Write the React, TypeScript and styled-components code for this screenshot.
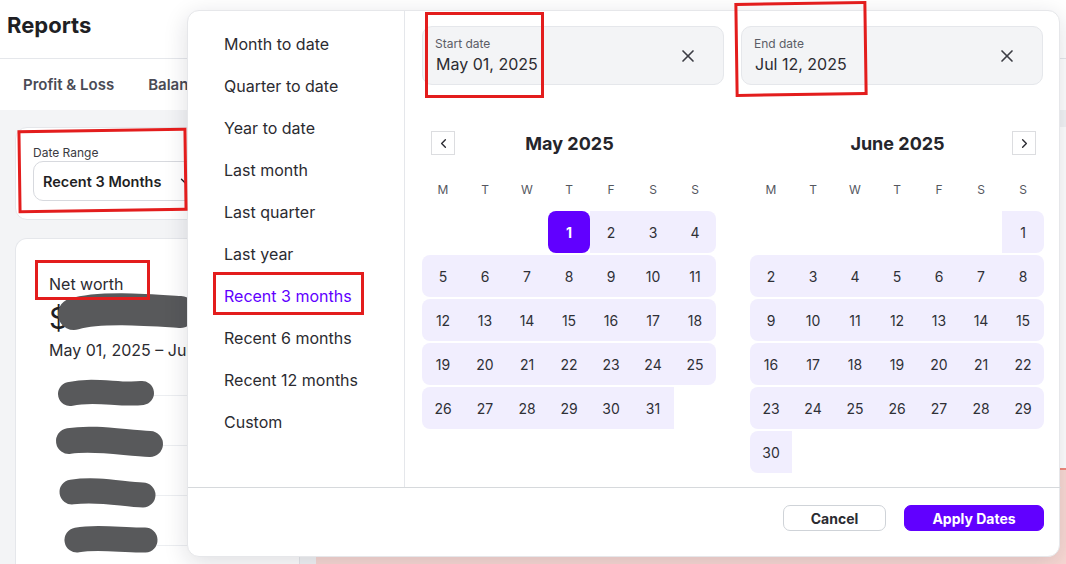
import React from "react";
import styled, { createGlobalStyle } from "styled-components";
import { X, ChevronLeft, ChevronRight, ChevronDown } from "lucide-react";

const GlobalStyle = createGlobalStyle`
  html, body { margin: 0; padding: 0; }
  body { font-family: Inter, "Noto Sans", Arial, sans-serif; color: #2b2b31; }
  * { box-sizing: border-box; }
`;

const PURPLE = "#6100ff";
const RANGE = "#f1eefe";

const Page = styled.div`
  position: relative;
  width: 1066px;
  height: 564px;
  overflow: hidden;
  background: #f3f4f6;
  display: flex;
  flex-direction: column;
`;

const Header = styled.header`
  flex-shrink: 0;
  height: 59px;
  background: #fff;
  border-bottom: 1px solid #e5e7eb;
  display: flex;
  align-items: center;
  padding-left: 7px;
  padding-bottom: 8px;
`;

const Title = styled.h1`
  margin: 0;
  font-size: 22px;
  font-weight: 700;
  color: #1f1f24;
`;

const Tabs = styled.nav`
  flex-shrink: 0;
  height: 51px;
  background: #fff;
  display: flex;
  align-items: center;
  gap: 34px;
  padding: 0 0 1px 23px;
`;

const Tab = styled.span`
  font-size: 15px;
  font-weight: 600;
  color: #4a4b55;
`;

const Content = styled.div`
  flex: 1;
  min-height: 0;
  overflow: hidden;
  display: grid;
  grid-template-columns: 285px 1fr;
  gap: 16px;
  padding: 17px 0 0 15px;
`;

const LeftCol = styled.div`
  display: flex;
  flex-direction: column;
  gap: 18px;
`;

const Card = styled.section`
  background: #fff;
  border: 1px solid #e5e7eb;
  border-radius: 12px;
`;

const RangeCard = styled(Card)`
  flex-shrink: 0;
  height: 93px;
  padding: 17px 0 0 17px;
`;

const FieldLabel = styled.div`
  font-size: 12px;
  line-height: 15px;
  color: #3a3a42;
  margin-bottom: 1px;
`;

const SelectBox = styled.div`
  width: 170px;
  height: 40px;
  border: 1px solid #d7d9de;
  border-radius: 10px;
  display: flex;
  align-items: center;
  justify-content: space-between;
  padding: 0 10px 0 9px;
  font-size: 14.5px;
  font-weight: 600;
  color: #1f1f24;
`;

const WorthCard = styled(Card)`
  flex: 1;
  padding: 35px 0 0 33px;
  border-bottom: none;
  border-radius: 12px 12px 0 0;
`;

const WorthLabel = styled.div`
  font-size: 16px;
  color: #2b2b31;
  line-height: 20px;
`;

const WorthValue = styled.div`
  font-size: 30px;
  line-height: 36px;
  margin-top: 6px;
  color: #1f1f24;
`;

const WorthDates = styled.div`
  font-size: 16px;
  line-height: 20px;
  margin-top: 4px;
  white-space: nowrap;
`;

const WorthRows = styled.div`
  margin-top: 35px;
  display: flex;
  flex-direction: column;
`;

const WorthRow = styled.div`
  height: 50px;
  margin-left: 100px;
  border-top: 1px solid #eceef1;
`;

const RightCol = styled.div`
  display: flex;
  flex-direction: column;
`;

const RightPanel = styled.div`
  flex: 1;
  background: #fff;
  border-top-left-radius: 12px;
`;

const PinkPanel = styled.div`
  height: 127px;
  background: #f9d9d4;
  border-top: 2px solid #f08a7c;
`;

/* ----- popup ----- */

const Popup = styled.div`
  position: absolute;
  left: 187px;
  top: 10px;
  width: 873px;
  height: 547px;
  background: #fff;
  border: 1px solid #e6e7ea;
  border-radius: 12px;
  box-shadow: 0 6px 24px rgba(20, 20, 40, 0.14);
  display: grid;
  grid-template-columns: 217px 1fr;
  grid-template-rows: 1fr 69px;
`;

const Presets = styled.ul`
  list-style: none;
  margin: 0;
  padding: 12px 0 0 36px;
  border-right: 1px solid #e5e7eb;
`;

const Preset = styled.li<{ $active?: boolean }>`
  height: 42px;
  line-height: 42px;
  font-size: 16px;
  color: ${(p) => (p.$active ? PURPLE : "#2b2b31")};
`;

const Main = styled.div`
  padding: 15px 17px 0 17px;
  display: flex;
  flex-direction: column;
`;

const DateInputs = styled.div`
  display: grid;
  grid-template-columns: 302px 302px;
  gap: 17px;
`;

const DateBox = styled.div`
  height: 59px;
  background: #f3f4f6;
  border: 1px solid #e5e7eb;
  border-radius: 10px;
  display: flex;
  align-items: center;
  justify-content: space-between;
  padding: 0 25px 0 12px;
`;

const DateText = styled.div`
  display: flex;
  flex-direction: column;
`;

const DateLabel = styled.span`
  font-size: 12px;
  color: #5b5d66;
  line-height: 16px;
`;

const DateValue = styled.span`
  font-size: 16px;
  color: #2b2b31;
  line-height: 22px;
  margin-top: 1px;
  margin-left: 1px;
`;

const Calendars = styled.div`
  margin-top: 46px;
  display: grid;
  grid-template-columns: 294px 294px;
  gap: 34px;
`;

const Calendar = styled.div`
  display: flex;
  flex-direction: column;
`;

const CalHead = styled.div`
  height: 24px;
  display: grid;
  grid-template-columns: 24px 1fr 24px;
  align-items: center;
  padding: 0 8px 0 9px;
`;

const CalTitle = styled.div`
  text-align: center;
  font-size: 18px;
  font-weight: 700;
  color: #25252b;
`;

const NavButton = styled.button`
  width: 24px;
  height: 24px;
  border: 1px solid #dcdde0;
  background: #fff;
  padding: 0;
  display: flex;
  align-items: center;
  justify-content: center;
  color: #2b2b31;
`;

const Grid = styled.div`
  display: grid;
  grid-template-columns: repeat(7, 42px);
  row-gap: 2px;
`;

const WeekRow = styled(Grid)`
  margin-top: 23px;
  margin-bottom: 9px;
`;

const WeekDay = styled.div`
  height: 24px;
  line-height: 24px;
  text-align: center;
  font-size: 12px;
  color: #55575f;
`;

const Day = styled.div<{ $kind: "empty" | "range" | "start"; $left?: boolean; $right?: boolean }>`
  height: 42px;
  display: flex;
  align-items: center;
  justify-content: center;
  font-size: 14px;
  color: ${(p) => (p.$kind === "start" ? "#fff" : "#2f3036")};
  font-weight: ${(p) => (p.$kind === "start" ? 700 : 400)};
  background: ${(p) => (p.$kind === "start" ? PURPLE : p.$kind === "range" ? RANGE : "transparent")};
  border-radius: ${(p) =>
    p.$kind === "start"
      ? "8px"
      : `${p.$left ? 8 : 0}px ${p.$right ? 8 : 0}px ${p.$right ? 8 : 0}px ${p.$left ? 8 : 0}px`};
`;

const Footer = styled.div`
  grid-column: 1 / -1;
  border-top: 1px solid #d6d9dc;
  display: flex;
  align-items: center;
  justify-content: flex-end;
  gap: 18px;
  padding: 0 17px 8px 0;
`;

const Button = styled.button<{ $primary?: boolean }>`
  height: 26px;
  padding: 0;
  width: ${(p) => (p.$primary ? "140px" : "103px")};
  border-radius: 7px;
  font-family: inherit;
  font-size: 14px;
  font-weight: 700;
  border: 1px solid ${(p) => (p.$primary ? PURPLE : "#cfd3d8")};
  background: ${(p) => (p.$primary ? PURPLE : "#fff")};
  color: ${(p) => (p.$primary ? "#fff" : "#2b2b31")};
`;

/* ----- overlays ----- */

const Redaction = styled.svg`
  position: absolute;
  left: 0;
  top: 0;
  pointer-events: none;
`;

const Mark = styled.div<{ $x: number; $y: number; $w: number; $h: number; $r: number }>`
  position: absolute;
  left: ${(p) => p.$x}px;
  top: ${(p) => p.$y}px;
  width: ${(p) => p.$w}px;
  height: ${(p) => p.$h}px;
  border: 3px solid #e31d1d;
  transform: rotate(${(p) => p.$r}deg);
  pointer-events: none;
`;

const presets = [
  "Month to date",
  "Quarter to date",
  "Year to date",
  "Last month",
  "Last quarter",
  "Last year",
  "Recent 3 months",
  "Recent 6 months",
  "Recent 12 months",
  "Custom",
];

const weekdays = ["M", "T", "W", "T", "F", "S", "S"];

type MonthProps = {
  title: string;
  offset: number;
  days: number;
  startDay?: number;
  nav: "prev" | "next";
};

function Month({ title, offset, days, startDay, nav }: MonthProps) {
  const cells: React.ReactNode[] = [];
  for (let i = 0; i < offset; i++) cells.push(<Day key={`e${i}`} $kind="empty" />);
  for (let d = 1; d <= days; d++) {
    const col = (offset + d - 1) % 7;
    cells.push(
      <Day
        key={d}
        $kind={d === startDay ? "start" : "range"}
        $left={col === 0}
        $right={col === 6}
      >
        {d}
      </Day>
    );
  }
  return (
    <Calendar>
      <CalHead>
        {nav === "prev" ? (
          <NavButton aria-label="Previous month">
            <ChevronLeft size={15} strokeWidth={2.2} />
          </NavButton>
        ) : (
          <span />
        )}
        <CalTitle>{title}</CalTitle>
        {nav === "next" ? (
          <NavButton aria-label="Next month">
            <ChevronRight size={15} strokeWidth={2.2} />
          </NavButton>
        ) : (
          <span />
        )}
      </CalHead>
      <WeekRow>
        {weekdays.map((w, i) => (
          <WeekDay key={i}>{w}</WeekDay>
        ))}
      </WeekRow>
      <Grid>{cells}</Grid>
    </Calendar>
  );
}

export default function App() {
  return (
    <>
      <GlobalStyle />
      <Page>
        <Header>
          <Title>Reports</Title>
        </Header>
        <Tabs>
          <Tab>Profit &amp; Loss</Tab>
          <Tab>Balance Sheet</Tab>
          <Tab>Cash Flow</Tab>
        </Tabs>
        <Content>
          <LeftCol>
            <RangeCard>
              <FieldLabel>Date Range</FieldLabel>
              <SelectBox>
                Recent 3 Months
                <ChevronDown size={14} strokeWidth={2.4} />
              </SelectBox>
            </RangeCard>
            <WorthCard>
              <WorthLabel>Net worth</WorthLabel>
              <WorthValue>$</WorthValue>
              <WorthDates>May 01, 2025 – Jul 12, 2025</WorthDates>
              <WorthRows>
                <WorthRow />
                <WorthRow />
                <WorthRow />
                <WorthRow />
              </WorthRows>
            </WorthCard>
          </LeftCol>
          <RightCol>
            <RightPanel />
            <PinkPanel />
          </RightCol>
        </Content>

        <Redaction width="200" height="564" viewBox="0 0 200 564">
          <g stroke="#58595b" strokeLinecap="round" fill="none">
            <path d="M74 314 C 100 306, 150 310, 180 312" strokeWidth="32" />
            <path d="M70 394 C 95 388, 120 396, 142 393" strokeWidth="24" />
            <path d="M69 441 C 95 437, 125 443, 150 444" strokeWidth="26" />
            <path d="M72 492 C 100 488, 125 495, 143 495" strokeWidth="25" />
            <path d="M77 540 C 100 536, 125 541, 145 540" strokeWidth="25" />
          </g>
        </Redaction>

        <Popup>
          <Presets>
            {presets.map((p) => (
              <Preset key={p} $active={p === "Recent 3 months"}>
                {p}
              </Preset>
            ))}
          </Presets>
          <Main>
            <DateInputs>
              <DateBox>
                <DateText>
                  <DateLabel>Start date</DateLabel>
                  <DateValue>May 01, 2025</DateValue>
                </DateText>
                <X size={20} strokeWidth={2} color="#3c3d44" />
              </DateBox>
              <DateBox>
                <DateText>
                  <DateLabel>End date</DateLabel>
                  <DateValue>Jul 12, 2025</DateValue>
                </DateText>
                <X size={20} strokeWidth={2} color="#3c3d44" />
              </DateBox>
            </DateInputs>
            <Calendars>
              <Month title="May 2025" offset={3} days={31} startDay={1} nav="prev" />
              <Month title="June 2025" offset={6} days={30} nav="next" />
            </Calendars>
          </Main>
          <Footer>
            <Button>Cancel</Button>
            <Button $primary>Apply Dates</Button>
          </Footer>
        </Popup>

        <Mark $x={18} $y={129} $w={169} $h={83} $r={-0.8} />
        <Mark $x={35} $y={260} $w={115} $h={40} $r={0} />
        <Mark $x={213} $y={272} $w={151} $h={43} $r={0} />
        <Mark $x={425} $y={12} $w={119} $h={86} $r={0} />
        <Mark $x={735} $y={2} $w={132} $h={94} $r={-0.8} />
      </Page>
    </>
  );
}
